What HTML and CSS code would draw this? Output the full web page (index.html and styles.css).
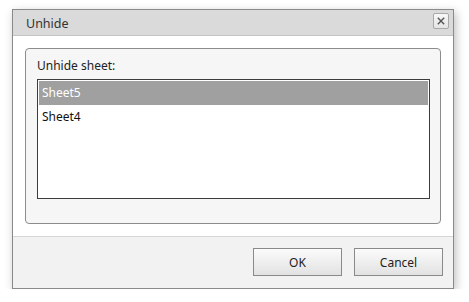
FILE: index.html
```html
<!DOCTYPE html>
<html>
<head>
<meta charset="utf-8">
<link rel="stylesheet" href="styles.css">
</head>
<body>
<div class="dialog">
  <div class="titlebar">
    <span class="title">Unhide</span>
    <span class="close">
      <svg width="10" height="10" viewBox="0 0 10 10"><path d="M1.8 1.8 L8.2 8.2 M8.2 1.8 L1.8 8.2" stroke="#555" stroke-width="1.4" fill="none"/></svg>
    </span>
  </div>
  <div class="content">
    <div class="panel">
      <div class="label">Unhide sheet:</div>
      <div class="list">
        <div class="row selected">Sheet5</div>
        <div class="row">Sheet4</div>
      </div>
    </div>
  </div>
  <div class="footer">
    <button class="btn">OK</button>
    <button class="btn">Cancel</button>
  </div>
</div>
</body>
</html>
```
FILE: styles.css
```css
html, body { margin: 0; padding: 0; background: #fff; }
body {
  font-family: "Noto Sans", "Open Sans", sans-serif;
  font-size: 12px;
  color: #222;
  padding: 9px 0 0 12px;
}
.dialog {
  width: 440px;
  border: 1px solid #8a8a8a;
  background: #fff;
  box-shadow: 2px 3px 9px rgba(0,0,0,0.25);
}
.titlebar {
  height: 25px;
  background: #dadada;
  border-bottom: 1px solid #c4c4c4;
  display: flex;
  align-items: center;
  justify-content: space-between;
  padding: 0 4px 0 13px;
}
.title { color: #333; font-size: 12.5px; position: relative; top: 1px; }
.close {
  width: 14px;
  height: 14px;
  border: 1px solid #a8a8a8;
  border-radius: 2px;
  background: linear-gradient(#f8f8f8, #e4e4e4);
  display: flex;
  align-items: center;
  justify-content: center;
  margin-top: -3px;
}
.close svg { display: block; }
.content { padding: 12px; }
.panel {
  height: 174px;
  border: 1px solid #8c8c8c;
  border-radius: 4px;
  background: #f6f6f6;
  padding: 0 10px 0 11px;
}
.label { padding-top: 8px; height: 22px; line-height: 18px; color: #222; }
.list {
  height: 116px;
  border: 1px solid #3c3c3c;
  padding: 1px;
  background: #fff;
}
.row {
  height: 24px;
  line-height: 24px;
  padding-left: 3px;
  color: #111;
}
.row.selected { background: #a0a0a0; color: #fff; }
.footer {
  border-top: 1px solid #d6d6d6;
  background: #f2f2f2;
  height: 52px;
  box-sizing: border-box;
  padding: 11px 10px 0 0;
  display: flex;
  justify-content: flex-end;
  gap: 12px;
}
.btn {
  width: 89px;
  height: 28px;
  border: 1px solid #8a8a8a;
  border-radius: 0;
  background: linear-gradient(#fbfbfb, #e2e2e2);
  font-family: "Noto Sans", "Open Sans", sans-serif;
  font-size: 12px;
  color: #222;
  padding: 0;
}
```
